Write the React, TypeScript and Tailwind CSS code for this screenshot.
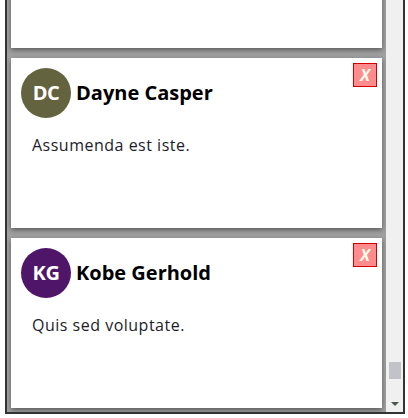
const people = [
  { initials: "MR", name: "Maida Rowe", color: "bg-[#2f6f5a]", text: "Et quia dolorem." },
  { initials: "DC", name: "Dayne Casper", color: "bg-[#636340]", text: "Assumenda est iste." },
  { initials: "KG", name: "Kobe Gerhold", color: "bg-[#4f1568]", text: "Quis sed voluptate." },
];

function Card({ p }: { p: (typeof people)[number] }) {
  return (
    <div className="relative h-[170px] shrink-0 bg-white p-[10px] shadow-[0_2px_5px_rgba(0,0,0,0.45)]">
      <button className="absolute right-[5px] top-[5px] flex h-[24px] w-[24px] items-center justify-center border border-[#d40000] bg-[#ff8c8c] font-['Open_Sans',sans-serif] text-[16px] font-bold italic leading-none text-[#fffbea]">
        X
      </button>
      <div className="flex items-center gap-[5px]">
        <div
          className={`flex h-[50px] w-[50px] items-center justify-center rounded-full ${p.color} font-['Open_Sans',sans-serif] text-[20px] font-bold tracking-[-0.5px] text-white`}
        >
          {p.initials}
        </div>
        <h3 className="font-['Open_Sans',sans-serif] text-[20px] font-bold text-black">{p.name}</h3>
      </div>
      <p className="mt-[15px] pl-[11px] font-['Open_Sans',sans-serif] text-[16px] leading-6 tracking-[0.5px] text-[#1c1c2a]">
        {p.text}
      </p>
    </div>
  );
}

export default function App() {
  return (
    <div className="h-[418px] w-[408px] bg-white">
      <div className="ml-[5px] flex h-[414px] w-[400px] border-x-2 border-b-2 border-[#333]">
        <div className="flex flex-1 flex-col justify-end gap-[10px] overflow-hidden bg-[#a0a0a0] p-1">
          {people.map((p) => (
            <Card key={p.name} p={p} />
          ))}
        </div>
        <div className="flex w-[17px] flex-col items-center bg-[#f0f0f0]">
          <div className="flex-1" />
          <div className="mb-[16px] h-[17px] w-[12px] bg-[#c2c2c9]" />
          <div className="flex h-[17px] w-full items-center justify-center">
            <div className="h-0 w-0 border-x-[4px] border-t-[4px] border-x-transparent border-t-[#4b574b]" />
          </div>
        </div>
      </div>
    </div>
  );
}
